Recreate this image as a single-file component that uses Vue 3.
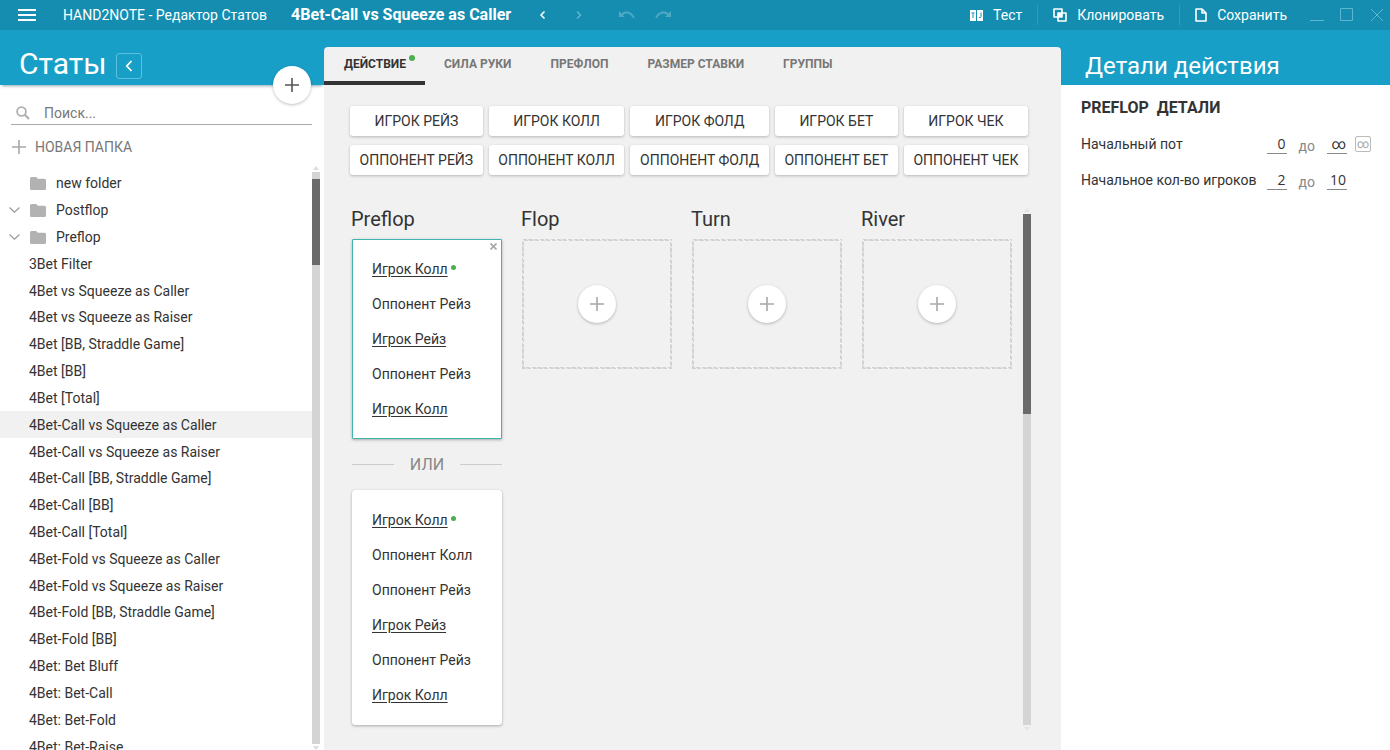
<script setup>
import { ref } from 'vue'

const search = ref('')
const folders = [
  { name: 'new folder', open: false },
  { name: 'Postflop', open: true },
  { name: 'Preflop', open: true },
]
const stats = [
  '3Bet Filter',
  '4Bet vs Squeeze as Caller',
  '4Bet vs Squeeze as Raiser',
  '4Bet [BB, Straddle Game]',
  '4Bet [BB]',
  '4Bet [Total]',
  '4Bet-Call vs Squeeze as Caller',
  '4Bet-Call vs Squeeze as Raiser',
  '4Bet-Call [BB, Straddle Game]',
  '4Bet-Call [BB]',
  '4Bet-Call [Total]',
  '4Bet-Fold vs Squeeze as Caller',
  '4Bet-Fold vs Squeeze as Raiser',
  '4Bet-Fold [BB, Straddle Game]',
  '4Bet-Fold [BB]',
  '4Bet: Bet Bluff',
  '4Bet: Bet-Call',
  '4Bet: Bet-Fold',
  '4Bet: Bet-Raise',
]
const selected = ref('4Bet-Call vs Squeeze as Caller')

const tabs = ['ДЕЙСТВИЕ', 'СИЛА РУКИ', 'ПРЕФЛОП', 'РАЗМЕР СТАВКИ', 'ГРУППЫ']
const activeTab = ref('ДЕЙСТВИЕ')

const moves = [
  'ИГРОК РЕЙЗ', 'ИГРОК КОЛЛ', 'ИГРОК ФОЛД', 'ИГРОК БЕТ', 'ИГРОК ЧЕК',
  'ОППОНЕНТ РЕЙЗ', 'ОППОНЕНТ КОЛЛ', 'ОППОНЕНТ ФОЛД', 'ОППОНЕНТ БЕТ', 'ОППОНЕНТ ЧЕК',
]
const lines = [
  ['Игрок Колл', 'Оппонент Рейз', 'Игрок Рейз', 'Оппонент Рейз', 'Игрок Колл'],
  ['Игрок Колл', 'Оппонент Колл', 'Оппонент Рейз', 'Игрок Рейз', 'Оппонент Рейз', 'Игрок Колл'],
]
const isHero = (action) => action.startsWith('Игрок')
const streets = ['Flop', 'Turn', 'River']

const pot = ref({ from: '0', to: '∞' })
const players = ref({ from: '2', to: '10' })
</script>

<template>
  <div class="app">
    <header class="titlebar">
      <button class="icon-btn menu" aria-label="Меню">
        <svg width="18" height="12" viewBox="0 0 18 12"><path d="M0 1h18M0 6h18M0 11h18" stroke="#fff" stroke-width="2" /></svg>
      </button>
      <span class="product">HAND2NOTE - Редактор Статов</span>
      <strong class="stat-name">4Bet-Call vs Squeeze as Caller</strong>
      <button class="icon-btn prev" aria-label="Назад">
        <svg width="8" height="10" viewBox="0 0 8 10"><path d="M5.500 1.500L2 5l3.500 3.500" fill="none" stroke="#fff" stroke-width="1.500" /></svg>
      </button>
      <button class="icon-btn next" aria-label="Вперёд">
        <svg width="8" height="10" viewBox="0 0 8 10"><path d="M2 1.500L5.500 5 2 8.500" fill="none" stroke="#5fb6d0" stroke-width="1.500" /></svg>
      </button>
      <button class="icon-btn undo" aria-label="Отменить">
        <svg width="16" height="8" viewBox="0 0 16 8"><path d="M0 0v6h6L3.700 3.900C7.500 1.200 12 2.500 14 7.300l1.700-.6C13.300.5 7 -1.200 2.400 2.400z" fill="#4fa9c5" /></svg>
      </button>
      <button class="icon-btn" aria-label="Повторить">
        <svg width="16" height="8" viewBox="0 0 16 8"><path d="M16 0v6h-6l2.300-2.100C8.500 1.200 4 2.500 2 7.300l-1.700-.6C2.700.5 9-1.200 13.600 2.400z" fill="#4fa9c5" /></svg>
      </button>
      <div class="commands">
        <button class="command">
          <svg width="13" height="11" viewBox="0 0 13 11"><path d="M0 0h6v11H0zM7 0h6v11H7z" fill="#fff" /><path d="M1.500 3h3M3 3v5M11 2.500v4q0 1.500-2 1" fill="none" stroke="#148db0" /></svg>
          Тест
        </button>
        <button class="command">
          <svg width="14" height="14" viewBox="0 0 14 14"><path d="M1 1h8v8H1zM5 5h8v8H5z" fill="none" stroke="#fff" stroke-width="1.600" stroke-linejoin="round" /><path d="M5 5h4v4H5z" fill="#fff" /></svg>
          Клонировать
        </button>
        <button class="command">
          <svg width="12" height="14" viewBox="0 0 12 14"><path d="M1 1h6l4 4v8H1zM7 1v4h4" fill="none" stroke="#fff" stroke-width="1.600" stroke-linejoin="round" /></svg>
          Сохранить
        </button>
      </div>
      <div class="window-buttons">
        <button class="icon-btn" aria-label="Свернуть"><svg width="14" height="14" viewBox="0 0 14 14"><path d="M0 12.500h14" stroke="#5fb6d0" /></svg></button>
        <button class="icon-btn" aria-label="Развернуть"><svg width="14" height="14" viewBox="0 0 14 14"><path d="M.5 .5h12v12H.5z" fill="none" stroke="#5fb6d0" /></svg></button>
        <button class="icon-btn" aria-label="Закрыть"><svg width="14" height="14" viewBox="0 0 14 14"><path d="M1 1l12 12M13 1L1 13" stroke="#5fb6d0" /></svg></button>
      </div>
    </header>

    <div class="body">
      <aside class="sidebar">
        <div class="side-head">
          <h1>Статы</h1>
          <button class="collapse" aria-label="Свернуть панель">
            <svg width="8" height="12" viewBox="0 0 8 12"><path d="M6.500 1L1.800 6l4.700 5" fill="none" stroke="#fff" stroke-width="1.800" /></svg>
          </button>
          <button class="round add-stat" aria-label="Добавить стат">
            <svg width="14" height="14" viewBox="0 0 14 14"><path d="M7 0v14M0 7h14" stroke="#555" stroke-width="1.600" /></svg>
          </button>
        </div>
        <label class="search">
          <svg width="14" height="14" viewBox="0 0 14 14"><circle cx="5.500" cy="5.500" r="4.400" fill="none" stroke="#b0b0b0" stroke-width="1.800" /><path d="M8.800 8.800L13 13" stroke="#b0b0b0" stroke-width="2.200" /></svg>
          <input v-model="search" type="text" placeholder="Поиск..." aria-label="Поиск" />
        </label>
        <button class="new-folder">
          <svg width="14" height="14" viewBox="0 0 14 14"><path d="M7 0v14M0 7h14" stroke="#a8a8a8" stroke-width="1.600" /></svg>
          НОВАЯ ПАПКА
        </button>
        <div class="tree">
          <ul class="rows">
            <li v-for="folder in folders" :key="folder.name">
              <button class="folder">
                <span class="chevron">
                  <svg v-if="folder.open" width="11" height="6" viewBox="0 0 11 6"><path d="M.5 .5l5 4.700 5-4.700" fill="none" stroke="#999" stroke-width="1.200" /></svg>
                </span>
                <svg width="16" height="13" viewBox="0 0 16 13"><path d="M1.500 0h4.700l1.600 1.800h6.700q1.500 0 1.500 1.500v8.200q0 1.500-1.500 1.500h-13Q0 13 0 11.500v-10Q0 0 1.500 0z" fill="#b2b2b2" /></svg>
                {{ folder.name }}
              </button>
            </li>
            <li v-for="stat in stats" :key="stat">
              <button class="stat" :class="{ selected: stat === selected }" @click="selected = stat">{{ stat }}</button>
            </li>
          </ul>
          <div class="scroll side-scroll">
            <svg width="6" height="4" viewBox="0 0 6 4"><path d="M3 0l3 4H0z" fill="#dcdcdc" /></svg>
            <div class="track"><div class="thumb"></div></div>
            <svg width="6" height="4" viewBox="0 0 6 4"><path d="M0 0h6L3 4z" fill="#dcdcdc" /></svg>
          </div>
        </div>
      </aside>

      <main class="editor">
        <nav class="tabs">
          <button v-for="tab in tabs" :key="tab" class="tab" :class="{ active: tab === activeTab }" @click="activeTab = tab">
            {{ tab }}<span v-if="tab === 'ДЕЙСТВИЕ'" class="dot tab-dot"></span>
          </button>
        </nav>
        <div class="moves">
          <button v-for="move in moves" :key="move">{{ move }}</button>
        </div>
        <div class="board">
          <div class="streets">
            <section class="street">
              <h2>Preflop</h2>
              <template v-for="(line, i) in lines" :key="i">
                <div v-if="i > 0" class="or">ИЛИ</div>
                <article class="card" :class="{ current: i === 0 }">
                  <button v-if="i === 0" class="close" aria-label="Удалить">
                    <svg width="7" height="7" viewBox="0 0 7 7"><path d="M.5 .5l6 6M6.500 .5l-6 6" stroke="#aaa" stroke-width="1.700" /></svg>
                  </button>
                  <ul>
                    <li v-for="(action, n) in line" :key="n">
                      <button :class="{ hero: isHero(action) }">{{ action }}</button>
                      <span v-if="n === 0" class="dot"></span>
                    </li>
                  </ul>
                </article>
              </template>
            </section>
            <section v-for="street in streets" :key="street" class="street">
              <h2>{{ street }}</h2>
              <div class="empty">
                <button class="round" :aria-label="'Добавить ' + street">
                  <svg width="14" height="14" viewBox="0 0 14 14"><path d="M7 0v14M0 7h14" stroke="#a8a8a8" stroke-width="1.600" /></svg>
                </button>
              </div>
            </section>
          </div>
          <div class="scroll board-scroll">
            <svg width="6" height="4" viewBox="0 0 6 4"><path d="M3 0l3 4H0z" fill="#e4e4e4" /></svg>
            <div class="track"><div class="thumb"></div></div>
            <svg width="6" height="4" viewBox="0 0 6 4"><path d="M0 0h6L3 4z" fill="#e4e4e4" /></svg>
          </div>
        </div>
      </main>

      <aside class="details">
        <h1>Детали действия</h1>
        <div class="details-body">
          <h3>PREFLOP&nbsp; ДЕТАЛИ</h3>
          <div class="field">
            <label for="pot-from">Начальный пот</label>
            <input id="pot-from" v-model="pot.from" type="text" />
            <label class="to" for="pot-to">до</label>
            <input id="pot-to" v-model="pot.to" type="text" :class="{ endless: pot.to === '∞' }" />
            <button class="infinity" aria-label="Без ограничения">∞</button>
          </div>
          <div class="field bounded">
            <label for="players-from">Начальное кол-во игроков</label>
            <input id="players-from" v-model="players.from" type="text" />
            <label class="to" for="players-to">до</label>
            <input id="players-to" v-model="players.to" type="text" />
          </div>
        </div>
      </aside>
    </div>
  </div>
</template>

<style>
body {
  margin: 0;
  overflow: hidden;
}
</style>

<style scoped>
.app {
  display: flex;
  flex-direction: column;
  height: 100vh;
  overflow: hidden;
  background: #fff;
  color: #333;
  font: 14px/20px Roboto, "Noto Sans", sans-serif;
}
.app *,
.app *::before,
.app *::after {
  box-sizing: border-box;
}
button,
input {
  margin: 0;
  padding: 0;
  border: 0;
  background: none;
  color: inherit;
  font: inherit;
}
svg {
  display: block;
  flex: none;
}
h1,
h2,
h3,
ul {
  margin: 0;
  padding: 0;
  font-weight: 400;
  list-style: none;
}
.titlebar {
  display: flex;
  flex: none;
  align-items: center;
  height: 30px;
  padding: 0 6px 0 18px;
  background: #148db0;
  color: #fff;
  white-space: nowrap;
}
.product {
  margin-left: 27px;
}
.stat-name {
  margin-left: 24px;
  font-size: 16px;
}
.prev,
.next {
  margin-left: 28px;
}
.undo {
  margin: 0 20px 0 36px;
}
.commands {
  display: flex;
  margin-left: auto;
}
.command {
  display: flex;
  align-items: center;
  gap: 10px;
  padding: 0 15px;
  border-left: 1px solid #2f9cbb;
}
.command:first-child {
  border-left: 0;
}
.window-buttons {
  display: flex;
  gap: 16px;
  margin-left: 8px;
}
.body {
  display: grid;
  flex: 1;
  grid-template-columns: 324px 1fr 329px;
  min-height: 0;
  background: linear-gradient(#189fc8 55px, #fff 55px);
}
.sidebar {
  display: flex;
  flex-direction: column;
  min-height: 0;
}
.side-head {
  position: relative;
  display: flex;
  flex: none;
  align-items: center;
  gap: 9px;
  height: 55px;
  padding: 13px 0 0 19px;
  box-shadow: 0 3px 3px -2px rgba(0, 60, 90, 0.45);
  color: #fff;
}
.side-head h1 {
  font-size: 30px;
  line-height: 40px;
}
.collapse {
  display: grid;
  place-items: center;
  width: 26px;
  height: 26px;
  margin-top: 4px;
  border: 1px solid #5cc0dc;
  border-radius: 3px;
}
.round {
  display: grid;
  place-items: center;
  width: 38px;
  height: 38px;
  border-radius: 50%;
  background: #fff;
  box-shadow: 0 1px 3px rgba(0, 0, 0, 0.25);
}
.add-stat {
  position: absolute;
  right: 13px;
  bottom: -19px;
}
.search {
  display: flex;
  flex: none;
  align-items: center;
  gap: 14px;
  height: 24px;
  margin: 16px 12px 0 11px;
  padding-left: 5px;
  border-bottom: 1px solid #aaa;
}
.search input {
  flex: 1;
  outline: none;
}
.search input::placeholder {
  color: #777;
  opacity: 1;
}
.new-folder {
  display: flex;
  flex: none;
  align-items: center;
  align-self: flex-start;
  gap: 9px;
  margin: 12px 0 0 12px;
  color: #777;
}
.tree {
  display: flex;
  flex: 1;
  min-height: 0;
  margin-top: 8px;
}
.rows {
  display: grid;
  flex: 1;
  grid-auto-rows: 1fr;
  margin: 5px 0 -10px;
}
.rows li {
  display: flex;
}
.folder,
.stat {
  display: flex;
  flex: 1;
  align-items: center;
  text-align: left;
}
.folder {
  gap: 10px;
}
.chevron {
  display: flex;
  justify-content: flex-end;
  width: 20px;
}
.stat {
  padding-left: 29px;
}
.selected {
  background: #f1f1f1;
}
.scroll {
  display: flex;
  flex: none;
  flex-direction: column;
  align-items: center;
  gap: 2px;
  width: 8px;
}
.track {
  flex: 1;
  width: 8px;
  background: #d4d4d4;
}
.thumb {
  background: #6a6a6a;
}
.side-scroll {
  margin: 1px 4px 0 0;
}
.side-scroll .track {
  padding-top: 7px;
}
.side-scroll .thumb {
  height: 86px;
}
.editor {
  display: flex;
  flex-direction: column;
  min-width: 0;
  min-height: 0;
  margin-top: 17px;
  border-radius: 4px 4px 0 0;
  background: #f1f1f1;
}
.tabs {
  display: flex;
  flex: none;
  height: 38px;
}
.tab {
  position: relative;
  padding: 0 20px 1px 19px;
  border-bottom: 4px solid transparent;
  color: #777;
  font-size: 12px;
  font-weight: 700;
  white-space: nowrap;
}
.tab:first-child {
  padding: 0 19px 1px 20px;
}
.tab.active {
  border-color: #333;
  color: #333;
}
.dot {
  width: 5px;
  height: 5px;
  border-radius: 50%;
  background: #4caf50;
}
.tab-dot {
  position: absolute;
  top: 8px;
  right: 10px;
  width: 6px;
  height: 6px;
}
.moves {
  display: grid;
  flex: none;
  grid-template-columns: repeat(5, auto);
  gap: 9px 6px;
  margin: 21px 33px 0 26px;
}
.moves button {
  height: 30px;
  padding: 0 8px;
  border-radius: 3px;
  background: #fff;
  box-shadow: 0 1px 3px rgba(0, 0, 0, 0.25);
  white-space: nowrap;
}
.board {
  display: flex;
  flex: 1;
  gap: 11px;
  min-height: 0;
  margin: 31px 30px 20px 28px;
}
.streets {
  display: grid;
  flex: 1;
  grid-template-columns: repeat(4, 1fr);
  align-items: start;
  gap: 20px;
}
.street h2 {
  margin: 0 0 7px -1px;
  font-size: 20px;
  line-height: 26px;
}
.card {
  position: relative;
  padding: 11px 19px 12px;
  border: 1px solid #fff;
  border-radius: 3px;
  background: #fff;
  box-shadow: 0 1px 3px rgba(0, 0, 0, 0.3);
}
.card.current {
  border-color: #3fb5b0;
  border-radius: 1px;
}
.card li {
  display: flex;
  align-items: center;
  gap: 3px;
  height: 35px;
  white-space: nowrap;
}
.card .dot {
  margin-bottom: 3px;
}
.hero {
  text-decoration: underline;
  text-underline-offset: 2px;
}
.close {
  position: absolute;
  top: 3px;
  right: 4px;
}
.or {
  display: flex;
  align-items: center;
  gap: 16px;
  height: 51px;
  color: #888;
  font-size: 16px;
}
.or::before,
.or::after {
  flex: 1;
  height: 1px;
  background: #ccc;
  content: "";
}
.empty {
  display: grid;
  place-items: center;
  height: 130px;
  border: 2px solid transparent;
  background:
    linear-gradient(#f1f1f1, #f1f1f1) padding-box,
    repeating-linear-gradient(45deg, #d2d2d2 0 3px, #f1f1f1 3px 4px) border-box;
}
.board-scroll {
  margin: 2px 0 -1px;
}
.board-scroll .thumb {
  height: 200px;
}
.details {
  min-width: 0;
}
.details h1 {
  height: 55px;
  padding: 18px 0 0 24px;
  color: #fff;
  font-size: 24px;
  line-height: 36px;
}
.details-body {
  padding: 13px 19px 0 20px;
}
.details h3 {
  margin-bottom: 8px;
  font-size: 16px;
  font-weight: 700;
}
.field {
  display: flex;
  align-items: center;
  height: 36px;
  white-space: nowrap;
}
.field.bounded {
  padding-right: 24px;
}
.field label:first-child {
  flex: 1;
}
.field input {
  width: 20px;
  padding-right: 1px;
  border-bottom: 1px solid #888;
  font-family: "Open Sans", "Noto Sans", sans-serif;
  line-height: 18px;
  text-align: right;
}
.field .endless {
  font-family: Roboto, sans-serif;
}
.to {
  padding: 3px 12px 0;
  color: #888;
}
.infinity {
  width: 16px;
  height: 16px;
  margin-left: 8px;
  border: 1px solid #bbb;
  border-radius: 2px;
  color: #aaa;
  font-size: 12px;
  line-height: 12px;
}
</style>
